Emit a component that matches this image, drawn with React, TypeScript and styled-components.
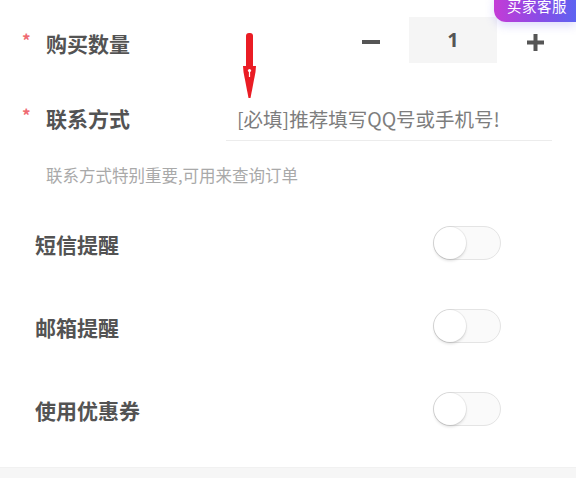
import React, { useState } from 'react';
import styled, { createGlobalStyle } from 'styled-components';

const GlobalStyle = createGlobalStyle`
	html, body {
		margin: 0;
		padding: 0;
		background: #ffffff;
		font-family: 'Noto Sans CJK SC', 'Noto Sans', sans-serif;
	}
	* {
		box-sizing: border-box;
	}
`;

const Page = styled.div`
	position: relative;
	width: 576px;
	height: 478px;
	overflow: hidden;
	background: #fff;
`;

const Row = styled.div<{ height: number; padLeft: number }>`
	display: flex;
	align-items: center;
	height: ${(p) => p.height}px;
	padding-left: ${(p) => p.padLeft}px;
`;

const Star = styled.span`
	width: 24px;
	align-self: center;
	margin-top: -8px;
	color: #ef6a72;
	font-size: 17px;
	font-weight: 700;
`;

const Label = styled.span<{ width?: number }>`
	flex: ${(p) => (p.width ? 'none' : '1')};
	width: ${(p) => (p.width ? `${p.width}px` : 'auto')};
	font-size: 21px;
	font-weight: 700;
	color: #535353;
	line-height: 1;
`;

const Stepper = styled.div`
	display: flex;
	align-items: center;
	padding-right: 21px;
	margin-top: -2px;
`;

const StepButton = styled.button`
	width: 40px;
	height: 40px;
	display: flex;
	align-items: center;
	justify-content: center;
	border: none;
	background: transparent;
	padding: 0;
	cursor: pointer;
`;

const CountBox = styled.div`
	width: 88px;
	height: 46px;
	margin: -4px 18px 0;
	padding-bottom: 2px;
	background: #f5f5f5;
	display: flex;
	align-items: center;
	justify-content: center;
	font-family: 'Noto Sans', 'Liberation Sans', sans-serif;
	font-size: 20px;
	font-weight: 700;
	color: #555;
`;

const Field = styled.div`
	width: 326px;
	height: 44px;
	margin-top: 2px;
	border-bottom: 1px solid #ececec;
	display: flex;
	align-items: center;
	padding-left: 11px;
	font-size: 19.5px;
	color: #7d7d7d;
`;

const Hint = styled.p`
	margin: 13px 0 16px;
	padding-left: 46px;
	height: 24px;
	line-height: 24px;
	font-size: 16.5px;
	color: #a9a9a9;
`;

const SwitchTrack = styled.button<{ on: boolean }>`
	position: relative;
	width: 68px;
	height: 34px;
	margin-right: 75px;
	margin-top: -3px;
	border-radius: 17px;
	border: 1px solid ${(p) => (p.on ? '#4b7bf5' : '#e4e4e4')};
	background: ${(p) => (p.on ? '#4b7bf5' : '#fafafa')};
	padding: 0;
	cursor: pointer;
`;

const SwitchKnob = styled.span<{ on: boolean }>`
	position: absolute;
	top: 0;
	left: ${(p) => (p.on ? '34px' : '0')};
	width: 32px;
	height: 32px;
	border-radius: 50%;
	background: #fff;
	box-shadow: 0 2px 3px rgba(0, 0, 0, 0.12), 0 0 0 1px rgba(0, 0, 0, 0.05);
`;

const BottomBand = styled.div`
	position: absolute;
	left: 0;
	right: 0;
	bottom: 0;
	height: 11px;
	background: #f6f6f6;
	border-top: 1px solid #f1f1f1;
`;

const ServiceBadge = styled.div`
	position: absolute;
	top: -11px;
	right: 0;
	width: 82px;
	height: 33px;
	padding-left: 4px;
	border-radius: 12px 0 0 12px;
	background: linear-gradient(90deg, #c43bd6 0%, #8a4ce6 55%, #5d63f1 100%);
	box-shadow: 0 4px 10px rgba(110, 100, 240, 0.22);
	display: flex;
	align-items: center;
	justify-content: center;
	color: #fff;
	font-size: 14.5px;
	letter-spacing: 0.5px;
`;

const Arrow = styled.svg`
	position: absolute;
	left: 240px;
	top: 30px;
`;

const Switch: React.FC<{ initial?: boolean }> = ({ initial = false }) => {
	const [on, setOn] = useState(initial);
	return (
		<SwitchTrack on={on} onClick={() => setOn(!on)}>
			<SwitchKnob on={on} />
		</SwitchTrack>
	);
};

const ToggleRow: React.FC<{ title: string }> = ({ title }) => (
	<Row height={83} padLeft={35}>
		<Label>{title}</Label>
		<Switch />
	</Row>
);

export default function App() {
	const [count, setCount] = useState(1);

	return (
		<Page>
			<GlobalStyle />
			<Row height={86} padLeft={22}>
				<Star>*</Star>
				<Label>购买数量</Label>
				<Stepper>
					<StepButton onClick={() => setCount(Math.max(1, count - 1))}>
						<svg width="18" height="18" viewBox="0 0 18 18">
							<rect x="0" y="7" width="18" height="4" fill="#555" />
						</svg>
					</StepButton>
					<CountBox>{count}</CountBox>
					<StepButton onClick={() => setCount(count + 1)}>
						<svg width="17" height="17" viewBox="0 0 17 17">
							<rect x="0" y="6.5" width="17" height="4" fill="#555" />
							<rect x="6.5" y="0" width="4" height="17" fill="#555" />
						</svg>
					</StepButton>
				</Stepper>
			</Row>
			<Row height={64} padLeft={22}>
				<Star>*</Star>
				<Label width={180}>联系方式</Label>
				<Field>[必填]推荐填写QQ号或手机号!</Field>
			</Row>
			<Hint>联系方式特别重要,可用来查询订单</Hint>
			<ToggleRow title="短信提醒" />
			<ToggleRow title="邮箱提醒" />
			<ToggleRow title="使用优惠券" />
			<BottomBand />

			<Arrow width="20" height="72" viewBox="0 0 20 72">
				<rect x="6" y="3" width="7" height="36" rx="3" fill="#ea1c24" />
				<path d="M3 36 L16 36 L15.5 42 L10.5 68 L8.5 68 L3.5 42 Z" fill="#ea1c24" />
				<circle cx="9.5" cy="40.5" r="1.6" fill="#fff" />
				<rect x="8.9" y="41" width="1.2" height="6" fill="#fff" />
			</Arrow>
			<ServiceBadge>买家客服</ServiceBadge>
		</Page>
	);
}
